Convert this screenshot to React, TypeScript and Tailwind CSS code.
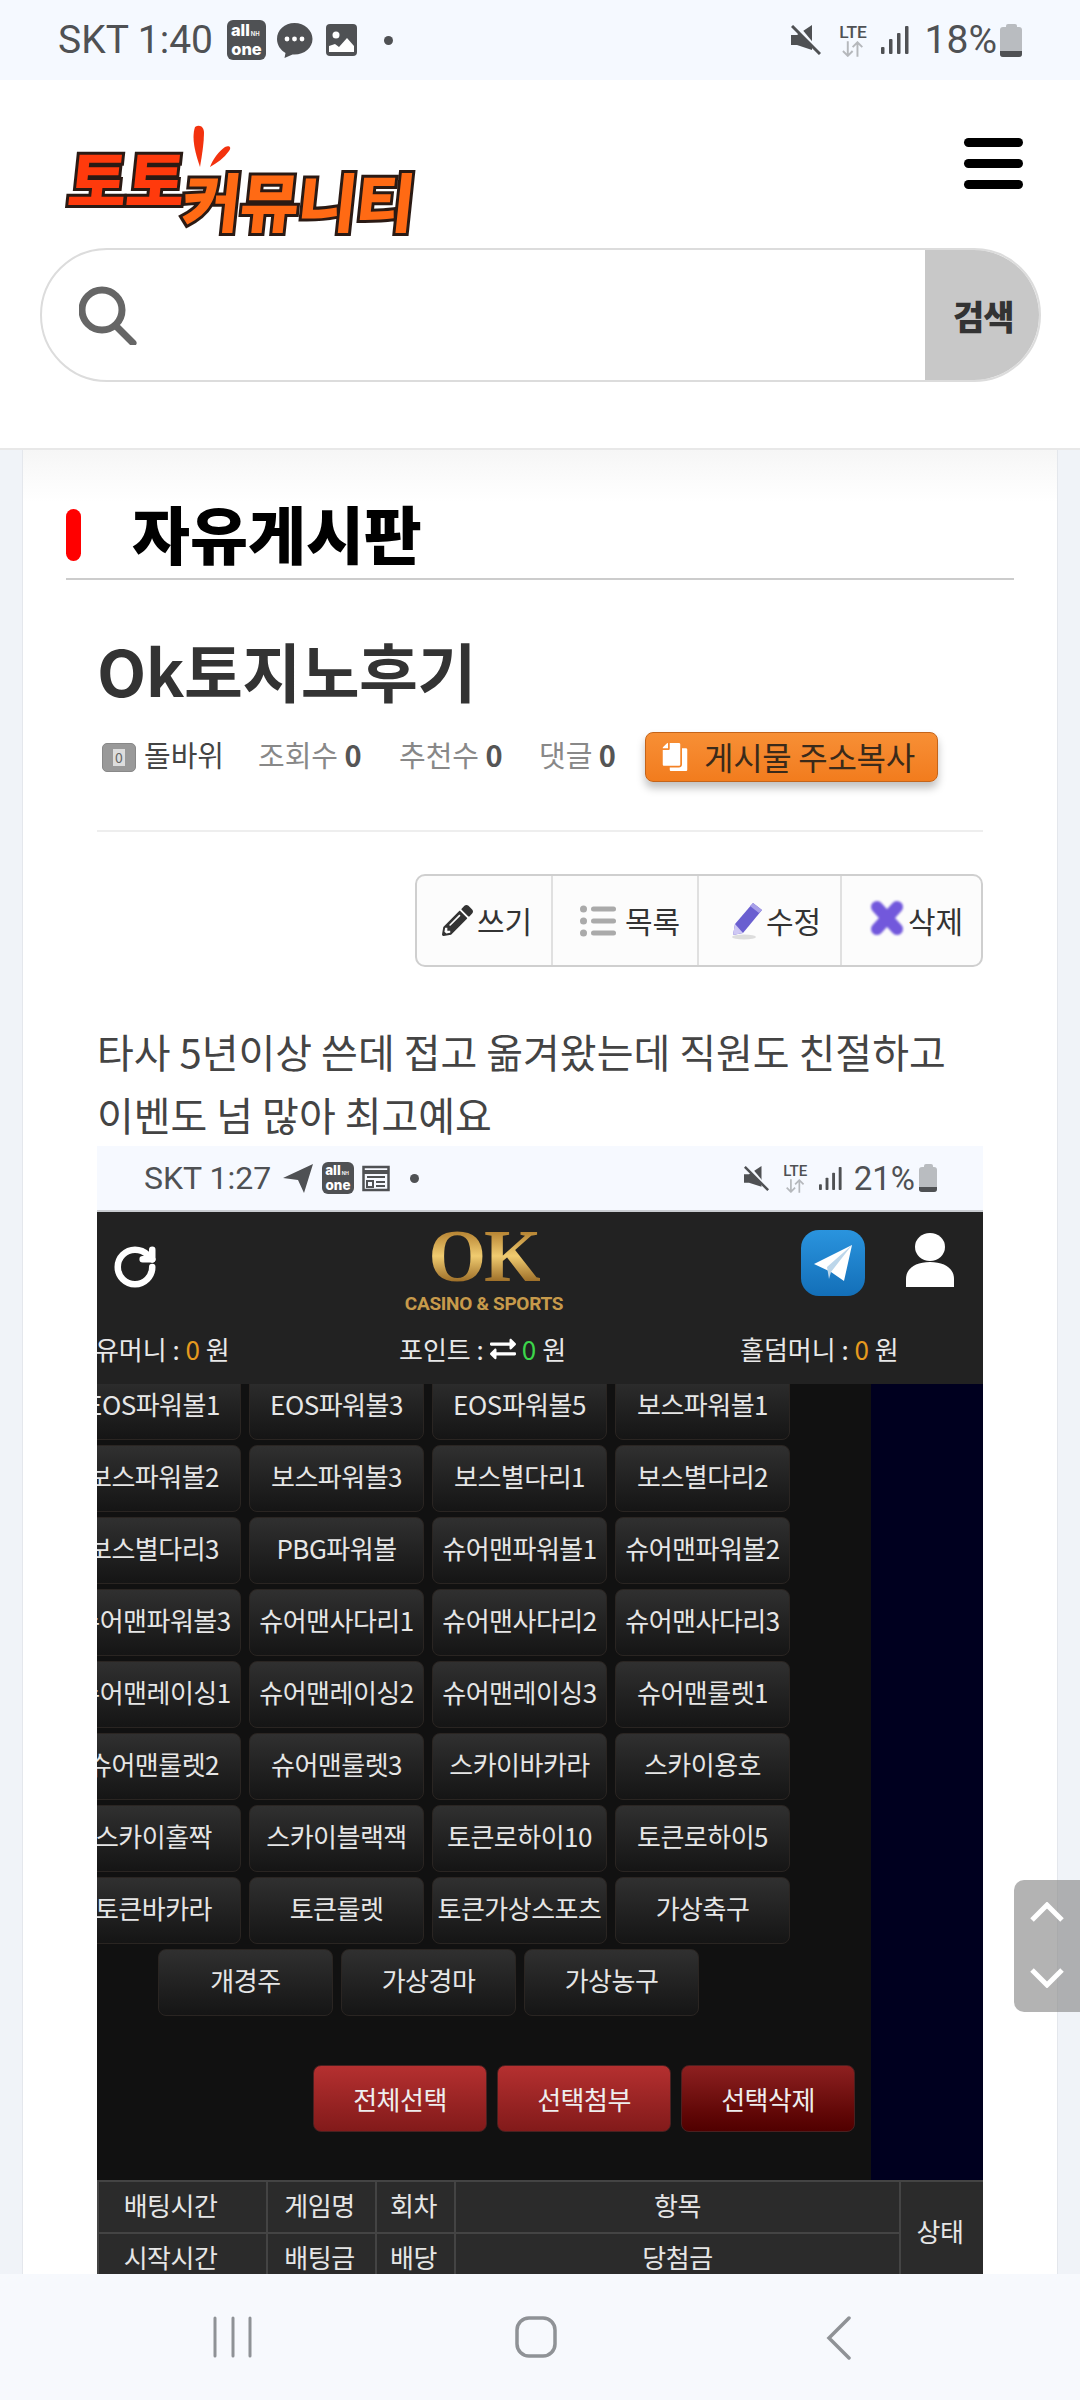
import React from "react";
import { FaPencilAlt, FaCopy, FaExchangeAlt } from "react-icons/fa";
import { RotateCw } from "lucide-react";

const KR = "font-['Noto_Sans_CJK_KR','Noto_Sans',sans-serif]";

function AllOne({ s }: { s: number }) {
  return (
    <div style={{ width: s, height: s * 1.03 }} className="bg-[#4f5154] rounded-[6px] flex flex-col items-center justify-center text-white font-extrabold font-['Inter',sans-serif]">
      <span className="flex items-baseline w-full pl-[10%]" style={{ fontSize: s * 0.42, lineHeight: `${s * 0.38}px` }}>
        all<span className="font-semibold ml-[1px]" style={{ fontSize: s * 0.15 }}>NH</span>
      </span>
      <span style={{ fontSize: s * 0.42, lineHeight: `${s * 0.38}px` }}>one</span>
    </div>
  );
}

function Mute({ s }: { s: number }) {
  return (
    <svg width={s} height={s} viewBox="0 0 30 30">
      <path d="M0 10h6L21 0v25L6 20H0z" fill="#4f5154" />
      <path d="M4-1l26 31" stroke="#f5f9ff" strokeWidth="4" />
      <path d="M1 1l28 28" stroke="#4f5154" strokeWidth="3" />
    </svg>
  );
}

function Lte({ s }: { s: number }) {
  return (
    <div className="flex flex-col items-center" style={{ width: s }}>
      <span className="font-['Roboto',sans-serif] font-medium text-[#4f5154]" style={{ fontSize: s * 0.56, lineHeight: `${s * 0.6}px` }}>LTE</span>
      <svg width={s * 0.75} height={s * 0.52} viewBox="0 0 24 16" stroke="#b5b8bc" strokeWidth="2" fill="none">
        <path d="M7 0v15M2 10l5 5 5-5M17 16V1M12 6l5-5 5 5" />
      </svg>
    </div>
  );
}

function Signal({ s }: { s: number }) {
  return (
    <svg width={s} height={s} viewBox="0 0 28 28" fill="#4f5154">
      <rect x="0" y="21" width="3.500" height="7" rx="1" />
      <rect x="8" y="13" width="3.500" height="15" rx="1" />
      <rect x="16" y="7" width="3.500" height="21" rx="1" />
      <rect x="24" y="0" width="3.500" height="28" rx="1" />
    </svg>
  );
}

function Battery({ w, h }: { w: number; h: number }) {
  return (
    <div className="flex flex-col items-center" style={{ width: w, height: h }}>
      <div className="bg-[#b9bcc0] rounded-t-[2px]" style={{ width: w * 0.5, height: h * 0.12 }} />
      <div className="bg-[#b9bcc0] rounded-[3px] w-full flex-1 flex flex-col justify-end overflow-hidden">
        <div className="bg-[#4f5154]" style={{ height: h * 0.18 }} />
      </div>
    </div>
  );
}

function StatusBar() {
  return (
    <div className="h-[80px] bg-[#f5f9ff] flex items-center shrink-0 text-[#4f5154] font-['Roboto',sans-serif]">
      <span className="ml-[58px] w-[156px] text-[39px] leading-none whitespace-nowrap">SKT 1:40</span>
      <div className="ml-[13px]"><AllOne s={39} /></div>
      <svg className="ml-[10px]" width="37" height="38" viewBox="0 0 37 38">
        <path d="M18.500 2C8.500 2 1 9 1 18c0 6 3.500 11 8.500 14l-1 5 8-3.500c.6.100 1.300.100 2 .1 10 0 18-7 18-15.600S28.500 2 18.500 2z" fill="#4f5154" />
        <circle cx="11" cy="18" r="2.400" fill="#fff" /><circle cx="18.500" cy="18" r="2.400" fill="#fff" /><circle cx="26" cy="18" r="2.400" fill="#fff" />
      </svg>
      <svg className="ml-[13px]" width="31" height="32" viewBox="0 0 31 32">
        <rect width="31" height="32" rx="4" fill="#4f5154" />
        <circle cx="10" cy="11" r="3.500" fill="#fff" />
        <path d="M3 28v-6l6-2 4 3 8-9 7 8v6z" fill="#fff" />
      </svg>
      <div className="ml-[27px] w-[9px] h-[9px] rounded-full bg-[#4f5154]" />
      <div className="ml-auto flex items-center">
        <Mute s={30} />
        <div className="ml-[17px]"><Lte s={31} /></div>
        <div className="ml-[12px]"><Signal s={28} /></div>
        <span className="ml-[16px] text-[39px] leading-none">18%</span>
        <div className="ml-[3px] mr-[58px]"><Battery w={22} h={33} /></div>
      </div>
    </div>
  );
}

function EmbeddedStatus() {
  return (
    <div className="h-[66px] bg-[#f6f9ff] border-b-2 border-[#c9ccd0] flex items-center shrink-0 text-[#4f5154] font-['Roboto',sans-serif]">
      <span className="ml-[47px] w-[130px] text-[32px] leading-none whitespace-nowrap">SKT 1:27</span>
      <svg className="ml-[9px]" width="30" height="29" viewBox="0 0 30 29"><path d="M0 14 30 0 21 29 15 16z" fill="#4f5154" /></svg>
      <div className="ml-[9px]"><AllOne s={32} /></div>
      <svg className="ml-[8px]" width="28" height="28" viewBox="0 0 28 28" fill="none" stroke="#4f5154" strokeWidth="2.500">
        <rect x="1.500" y="3" width="25" height="23" /><path d="M1 8h26" strokeWidth="4" /><path d="M5 13h18M14 18h9M14 22h9M5 17h6v6H5z" strokeWidth="2" />
      </svg>
      <div className="ml-[20px] w-[9px] h-[9px] rounded-full bg-[#4f5154]" />
      <div className="ml-auto flex items-center">
        <Mute s={25} />
        <div className="ml-[13px]"><Lte s={27} /></div>
        <div className="ml-[10px]"><Signal s={23} /></div>
        <span className="ml-[12px] text-[33px] leading-none">21%</span>
        <div className="ml-[4px] mr-[46px]"><Battery w={18} h={28} /></div>
      </div>
    </div>
  );
}

function Logo() {
  const stroke = "[-webkit-text-stroke:6px_#2a1a14] [paint-order:stroke_fill] font-black leading-none tracking-[-1px] -skew-x-6 whitespace-nowrap";
  return (
    <div className={`relative w-[350px] h-[112px] ${KR}`}>
      <svg className="absolute left-[122px] top-0" width="50" height="44" viewBox="0 0 50 44">
        <path d="M7 2c5-3 9 0 9 6 0 10-2 22-4 34C8 30 3 14 7 2z" fill="#f3320e" />
        <path d="M22 42c3-8 9-16 15-20 4-2 7 0 4 4-5 7-12 12-19 16z" fill="#f3320e" />
      </svg>
      <span className={`absolute left-[3px] top-[20px] text-[64px] text-[#ff3a0c] ${stroke}`}>토토</span>
      <span className={`absolute left-[117px] top-[42px] text-[64px] text-[#ff6a14] ${stroke}`}>커뮤니티</span>
    </div>
  );
}

function Header() {
  return (
    <div className="h-[370px] bg-white border-b-2 border-[#e8e8e8] shrink-0 flex flex-col">
      <div className="h-[168px] flex items-start justify-between">
        <div className="ml-[66px] mt-[45px]"><Logo /></div>
        <div className="mr-[57px] mt-[58px] flex flex-col gap-[12px]">
          <div className="w-[59px] h-[9px] rounded-full bg-black" />
          <div className="w-[59px] h-[9px] rounded-full bg-black" />
          <div className="w-[59px] h-[9px] rounded-full bg-black" />
        </div>
      </div>
      <div className="ml-[40px] mr-[39px] h-[134px] rounded-full border-2 border-[#dcdcdc] flex items-stretch overflow-hidden">
        <div className="flex-1 flex items-center pl-[37px]">
          <svg width="60" height="60" viewBox="0 0 60 60" fill="none" stroke="#666" strokeWidth="7" strokeLinecap="round">
            <circle cx="23" cy="25" r="20" /><path d="M37 41l17 17" />
          </svg>
        </div>
        <div className={`w-[114px] bg-[#c8c8c8] flex items-center pl-[28px] text-[34px] font-black text-[#333] tracking-[-1px] ${KR}`}>검색</div>
      </div>
    </div>
  );
}

function ButtonCell({ cls, icon, label, gap, last }: { cls: string; icon: React.ReactNode; label: string; gap: string; last?: boolean }) {
  return (
    <div className={`${cls} h-full flex items-center ${last ? "" : "border-r-2 border-[#e0e0e0]"}`}>
      {icon}
      <span className={`${gap} text-[30px] text-[#333] leading-none pb-[2px] whitespace-nowrap`}>{label}</span>
    </div>
  );
}

const rows = [
  ["EOS파워볼1", "EOS파워볼3", "EOS파워볼5", "보스파워볼1"],
  ["보스파워볼2", "보스파워볼3", "보스별다리1", "보스별다리2"],
  ["보스별다리3", "PBG파워볼", "슈어맨파워볼1", "슈어맨파워볼2"],
  ["슈어맨파워볼3", "슈어맨사다리1", "슈어맨사다리2", "슈어맨사다리3"],
  ["슈어맨레이싱1", "슈어맨레이싱2", "슈어맨레이싱3", "슈어맨룰렛1"],
  ["슈어맨룰렛2", "슈어맨룰렛3", "스카이바카라", "스카이용호"],
  ["스카이홀짝", "스카이블랙잭", "토큰로하이10", "토큰로하이5"],
  ["토큰바카라", "토큰룰렛", "토큰가상스포츠", "가상축구"],
];

function GameBtn({ label }: { label: string }) {
  return (
    <div className="w-[175px] h-[67px] shrink-0 rounded-[8px] border border-[#2a2522] bg-gradient-to-b from-[#303030] to-[#151515] flex items-center justify-center text-[26px] text-[#e6e6e6] tracking-[-0.5px] whitespace-nowrap pb-[6px]">
      {label}
    </div>
  );
}

function RedBtn({ label, dark }: { label: string; dark?: boolean }) {
  return (
    <div className={`w-[174px] h-[67px] rounded-[8px] border border-[#4a2020] bg-gradient-to-b ${dark ? "from-[#8e2020] to-[#500000]" : "from-[#b53030] to-[#821a1a]"} flex items-center justify-center text-[26px] text-[#eee] tracking-[-0.5px]`}>
      {label}
    </div>
  );
}

function GameScreen() {
  const td = "border-2 border-[#444] pb-[5px]";
  return (
    <div className={`w-[886px] shrink-0 flex flex-col overflow-hidden ${KR}`}>
      <EmbeddedStatus />
      <div className="h-[172px] bg-[#222] shrink-0 flex flex-col overflow-hidden">
        <div className="h-[110px] shrink-0 flex items-start text-white">
          <RotateCw className="ml-[15px] mt-[32px]" size={46} strokeWidth={3.4} color="#fff" />
          <div className="ml-[246px] mt-[14px] w-[160px] flex flex-col items-center">
            <span className="font-['Liberation_Serif',serif] font-bold text-[74px] leading-[60px] tracking-[-2px] bg-gradient-to-b from-[#a97424] via-[#f0cc70] to-[#8f5f1a] bg-clip-text text-transparent">OK</span>
            <span className="mt-[8px] font-['Roboto',sans-serif] font-bold text-[19px] leading-[20px] text-[#c79a4b] whitespace-nowrap tracking-[-0.3px]">CASINO &amp; SPORTS</span>
          </div>
          <div className="ml-[237px] mt-[18px] w-[64px] h-[66px] rounded-[18px] bg-gradient-to-b from-[#2a94de] to-[#136fb8] flex items-center justify-center">
            <svg width="38" height="36" viewBox="0 0 38 36"><path d="M0 19 38 0 30 36 17 27z" fill="#fff" /><path d="M17 27 38 0 13 22l2 12z" fill="#bcd6ea" /></svg>
          </div>
          <svg className="ml-[41px] mt-[21px]" width="48" height="54" viewBox="0 0 48 54" fill="#fff">
            <ellipse cx="24" cy="14" rx="15" ry="14" />
            <path d="M0 54V46C0 35 10 29 24 29s24 6 24 17v8z" />
          </svg>
        </div>
        <div className="flex items-center text-[26px] text-[#e8e8e8] whitespace-nowrap h-[62px] leading-none pb-[8px]">
          <span className="ml-[-26px] w-[328px] shrink-0">보유머니 : <span className="text-[#e69a1e]">0</span> 원</span>
          <span className="flex items-center gap-[6px] w-[341px] shrink-0">포인트 : <FaExchangeAlt size={26} color="#fff" /> <span className="text-[#3cd64a]">0</span> 원</span>
          <span className="shrink-0">홀덤머니 : <span className="text-[#e69a1e]">0</span> 원</span>
        </div>
      </div>
      <div className="h-[796px] shrink-0 bg-[#111] flex overflow-hidden">
        <div className="w-[774px] shrink-0 flex flex-col gap-[5px] mt-[-11px]">
          {rows.map((r, i) => (
            <div key={i} className="flex gap-[8px] ml-[-31px]">
              {r.map((l) => <GameBtn key={l} label={l} />)}
            </div>
          ))}
          <div className="flex gap-[8px] ml-[61px]">
            {["개경주", "가상경마", "가상농구"].map((l) => <GameBtn key={l} label={l} />)}
          </div>
          <div className="flex gap-[10px] ml-[216px] mt-[44px]">
            <RedBtn label="전체선택" />
            <RedBtn label="선택첨부" />
            <RedBtn label="선택삭제" dark />
          </div>
        </div>
        <div className="flex-1 bg-[#00001f]" />
      </div>
      <table className="w-[886px] table-fixed border-collapse bg-[#2b2b2b] text-[26px] text-[#e6e6e6] text-center shrink-0 tracking-[-0.5px]">
        <colgroup>
          <col className="w-[169px]" /><col className="w-[109px]" /><col className="w-[79px]" /><col className="w-[445px]" /><col className="w-[84px]" />
        </colgroup>
        <tbody>
          <tr className="h-[52px]">
            <td className={`${td} pr-[24px]`}>배팅시간</td>
            <td className={`${td} pr-[4px]`}>게임명</td>
            <td className={`${td} pr-[4px]`}>회차</td>
            <td className={td}>항목</td>
            <td rowSpan={2} className={`${td} pr-[4px]`}>상태</td>
          </tr>
          <tr className="h-[52px]">
            <td className={`${td} pr-[24px]`}>시작시간</td>
            <td className={`${td} pr-[4px]`}>배팅금</td>
            <td className={`${td} pr-[4px]`}>배당</td>
            <td className={td}>당첨금</td>
          </tr>
        </tbody>
      </table>
    </div>
  );
}

function Card() {
  const metaText = "mb-[6px]";
  return (
    <div className={`mx-[22px] flex-1 bg-white border-x border-[#e4e7ec] overflow-hidden ${KR}`}>
      <div className="bg-gradient-to-b from-[#f6f6f6] to-white to-40%">
        <div className="mx-[43px] h-[130px] pt-[42px] border-b-2 border-[#cccccc] flex items-center gap-[51px]">
          <div className="w-[15px] h-[52px] rounded-full bg-[#ff0000]" />
          <span className="text-[63px] font-black text-black leading-none pb-[7px]">자유게시판</span>
        </div>
      </div>
      <div className="mx-[74px] flex flex-col">
        <div className="mt-[41px] h-[96px] text-[64px] leading-[96px] font-bold text-[#333] tracking-[-0.5px]">Ok토지노후기</div>
        <div className="mt-[15px] h-[50px] flex items-center whitespace-nowrap text-[29px] text-[#888] leading-none">
          <div className="ml-[5px] w-[34px] h-[29px] rounded-[5px] bg-[#999] border border-[#888] flex items-center justify-center">
            <span className="w-[12px] h-[17px] bg-[#ddd] text-[14px] leading-[17px] text-center text-[#666]">0</span>
          </div>
          <span className={`ml-[8px] text-[#444] w-[114px] ${metaText}`}>돌바위</span>
          <span className={`w-[141px] ${metaText}`}>조회수 <b className="text-[#555]">0</b></span>
          <span className={`w-[140px] ${metaText}`}>추천수 <b className="text-[#555]">0</b></span>
          <span className={`w-[105px] ${metaText}`}>댓글 <b className="text-[#555]">0</b></span>
          <div className="ml-[1px] w-[293px] h-[50px] rounded-[8px] border border-[#c4641a] bg-gradient-to-b from-[#f78f35] to-[#f27c1d] shadow-[0_6px_8px_rgba(0,0,0,0.25)] flex items-center pl-[15px] gap-[15px]">
            <FaCopy size={28} color="#fff" className="-scale-x-100" />
            <span className="text-[32px] text-[#3a2a1a] tracking-[-0.3px] pb-[3px]">게시물 주소복사</span>
          </div>
        </div>
        <div className="mt-[48px] h-[2px] bg-[#eeeeee]" />
        <div className="mt-[42px] flex justify-end">
          <div className="h-[93px] w-[568px] rounded-[10px] border-2 border-[#cfcfcf] bg-[#fcfcfc] flex">
            <ButtonCell cls="w-[136px] pl-[25px]" gap="ml-[4px]" label="쓰기" icon={<FaPencilAlt size={31} color="#333" />} />
            <ButtonCell cls="w-[146px] pl-[27px]" gap="ml-[9px]" label="목록" icon={
              <svg width="36" height="32" viewBox="0 0 36 32" fill="#aaa">
                <circle cx="3.500" cy="4" r="3.500" /><circle cx="3.500" cy="16" r="3.500" /><circle cx="3.500" cy="28" r="3.500" />
                <rect x="11" y="1.500" width="25" height="5" rx="2.500" /><rect x="11" y="13.500" width="25" height="5" rx="2.500" /><rect x="11" y="25.500" width="25" height="5" rx="2.500" />
              </svg>
            } />
            <ButtonCell cls="w-[143px] pl-[33px]" gap="ml-[4px]" label="수정" icon={
              <svg width="30" height="38" viewBox="0 0 30 38">
                <ellipse cx="12" cy="35" rx="12" ry="2.500" fill="#ddd" />
                <path d="M21 1l9 7L11 31l-10 2 2-11z" fill="#6a5fd0" />
                <path d="M21 1l9 7-3 3-9-7z" fill="#a79fe8" />
                <path d="M3 22l8 9-10 2z" fill="#cfc8f4" />
              </svg>
            } />
            <ButtonCell cls="flex-1 pl-[28px]" gap="ml-[4px]" last label="삭제" icon={
              <svg width="34" height="36" viewBox="0 0 34 36" className="blur-[1px] mb-[6px]">
                <path d="M7 7l20 22M27 7L7 29" stroke="#7258dc" strokeWidth="12" strokeLinecap="round" />
              </svg>
            } />
          </div>
        </div>
        <div className="mt-[53px] text-[40px] leading-[63px] text-[#444] whitespace-nowrap">
          <div>타사 5년이상 쓴데 접고 옮겨왔는데 직원도 친절하고</div>
          <div>이벤도 넘 많아 최고예요</div>
        </div>
        <GameScreen />
      </div>
    </div>
  );
}

export default function App() {
  return (
    <div className="relative w-[1080px] h-[2400px] flex flex-col overflow-hidden bg-[#f0f3f8]">
      <StatusBar />
      <Header />
      <div className="flex-1 min-h-0 overflow-hidden flex flex-col"><Card /></div>
      <div className="h-[126px] bg-[#f7f9fd] shrink-0 flex items-start pt-[42px] relative">
        <svg className="ml-[213px]" width="40" height="42" viewBox="0 0 40 42" stroke="#8f9296" strokeWidth="3" strokeLinecap="round">
          <path d="M2 2v38M20 2v38M37 2v38" />
        </svg>
        <svg className="ml-[262px]" width="42" height="42" viewBox="0 0 42 42" fill="none" stroke="#8f9296" strokeWidth="3.500">
          <rect x="2" y="2" width="38" height="38" rx="12" />
        </svg>
        <svg className="ml-[269px]" width="26" height="44" viewBox="0 0 26 44" fill="none" stroke="#8f9296" strokeWidth="3.500" strokeLinecap="round">
          <path d="M23 2 3 22l20 20" />
        </svg>
      </div>
      <div className="absolute left-[1014px] top-[1880px] w-[66px] h-[132px] rounded-l-[10px] bg-[#8a8a8a]/65 flex flex-col items-center pt-[22px] gap-[45px]">
        <svg width="34" height="20" viewBox="0 0 34 20" fill="none" stroke="#fff" strokeWidth="5"><path d="M2 18 17 3l15 15" /></svg>
        <svg width="34" height="21" viewBox="0 0 34 21" fill="none" stroke="#fff" strokeWidth="5"><path d="M2 3l15 15L32 3" /></svg>
      </div>
    </div>
  );
}
